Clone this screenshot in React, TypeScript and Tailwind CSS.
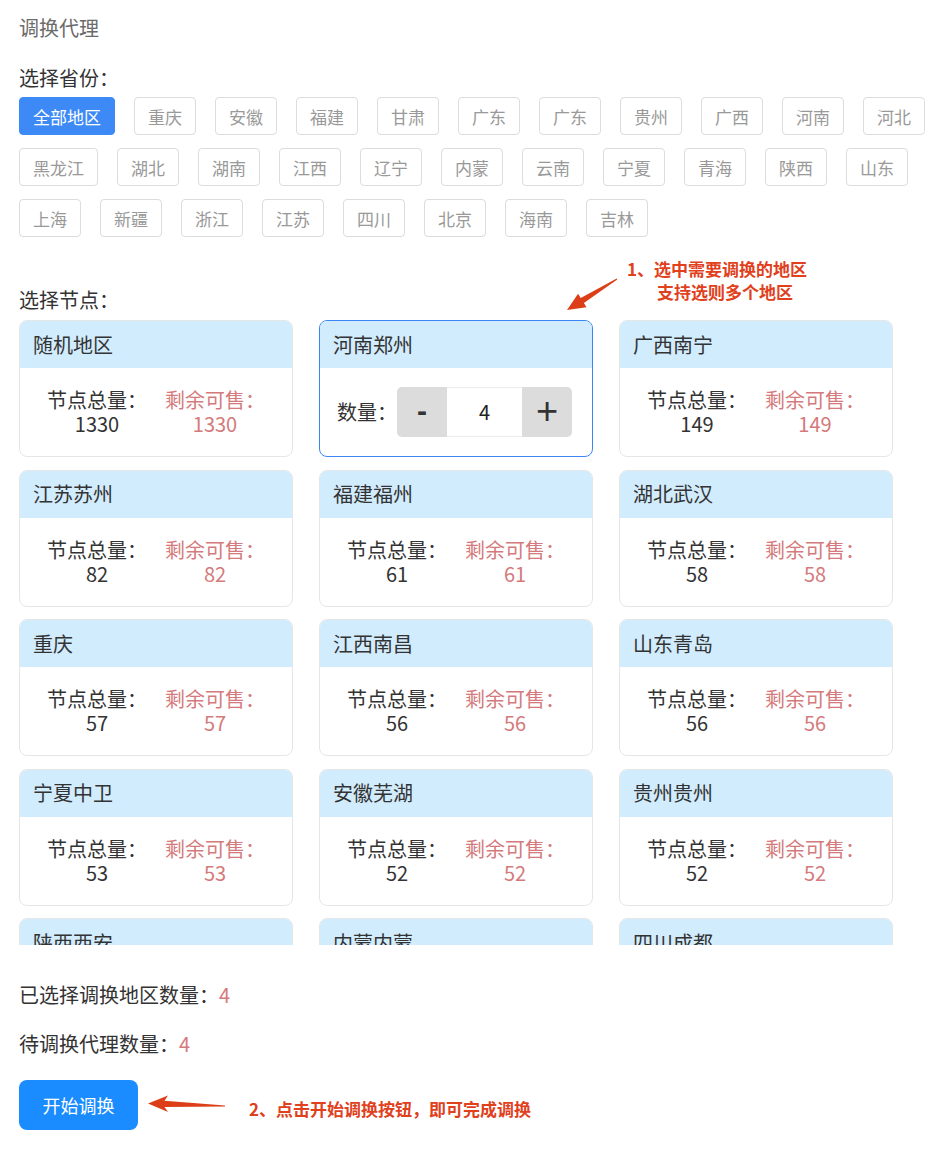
import React, { useState } from "react";

const provinces = [
  "全部地区", "重庆", "安徽", "福建", "甘肃", "广东", "广东", "贵州", "广西", "河南", "河北",
  "黑龙江", "湖北", "湖南", "江西", "辽宁", "内蒙", "云南", "宁夏", "青海", "陕西", "山东",
  "上海", "新疆", "浙江", "江苏", "四川", "北京", "海南", "吉林",
];

type Node = { name: string; total: number; left: number };

const nodes: Node[] = [
  { name: "随机地区", total: 1330, left: 1330 },
  { name: "河南郑州", total: 96, left: 96 },
  { name: "广西南宁", total: 149, left: 149 },
  { name: "江苏苏州", total: 82, left: 82 },
  { name: "福建福州", total: 61, left: 61 },
  { name: "湖北武汉", total: 58, left: 58 },
  { name: "重庆", total: 57, left: 57 },
  { name: "江西南昌", total: 56, left: 56 },
  { name: "山东青岛", total: 56, left: 56 },
  { name: "宁夏中卫", total: 53, left: 53 },
  { name: "安徽芜湖", total: 52, left: 52 },
  { name: "贵州贵州", total: 52, left: 52 },
  { name: "陕西西安", total: 50, left: 50 },
  { name: "内蒙内蒙", total: 48, left: 48 },
  { name: "四川成都", total: 47, left: 47 },
];

function Stepper({ value, onChange }: { value: number; onChange: (v: number) => void }) {
  return (
    <div className="flex h-[50px]">
      <button
        className="w-[50px] h-[50px] bg-[#dcdcdc] rounded-l-[5px] flex items-center justify-center text-[#333] font-['Liberation_Sans',sans-serif] font-bold text-[30px] leading-none pb-[2px]"
        onClick={() => onChange(Math.max(0, value - 1))}
      >
        -
      </button>
      <div className="w-[75px] h-[50px] border-y border-[#ececec] bg-white flex items-center justify-center text-[20px] text-[#222]">
        {value}
      </div>
      <button
        className="w-[50px] h-[50px] bg-[#dcdcdc] rounded-r-[5px] flex items-center justify-center text-[#333] font-['Liberation_Sans',sans-serif] text-[38px] leading-none pb-[3px]"
        onClick={() => onChange(value + 1)}
      >
        +
      </button>
    </div>
  );
}

function NodeCard({
  node,
  selected,
  count,
  onCount,
}: {
  node: Node;
  selected: boolean;
  count: number;
  onCount: (v: number) => void;
}) {
  return (
    <div
      className={
        "h-[137px] rounded-[8px] border overflow-hidden flex flex-col bg-white " +
        (selected ? "border-[#3b86f5]" : "border-[#e6e6e6]")
      }
    >
      <div className="h-[47px] shrink-0 bg-[#d1ecfd] flex items-center pl-[13px] text-[20px] leading-[28px] text-[#333]">
        {node.name}
      </div>
      {selected ? (
        <div className="flex-1 flex items-center pl-[17px]">
          <span className="text-[20px] leading-[28px] text-[#333]">数量：</span>
          <Stepper value={count} onChange={onCount} />
        </div>
      ) : (
        <div className="flex-1 grid grid-cols-2 items-center px-[18px] text-[20px] leading-[24px]">
          <div className="flex flex-col items-center text-[#333]">
            <span>节点总量：</span>
            <span>{node.total}</span>
          </div>
          <div className="flex flex-col items-center text-[#d47a7c]">
            <span>剩余可售：</span>
            <span>{node.left}</span>
          </div>
        </div>
      )}
    </div>
  );
}

export default function App() {
  const [active, setActive] = useState(0);
  const [count, setCount] = useState(4);

  return (
    <div className="relative w-[937px] h-[1161px] bg-white overflow-hidden pl-[19px] font-['Noto_Sans_CJK_SC','Noto_Sans',sans-serif]">
      <div className="mt-[14px] h-[28px] leading-[28px] text-[20px] text-[#6b6b6b]">调换代理</div>

      <div className="mt-[22px] h-[28px] leading-[28px] text-[20px] text-[#333]">选择省份：</div>

      <div className="mt-[5px] flex flex-wrap gap-x-[19px] gap-y-[13px]">
        {provinces.map((p, i) => (
          <button
            key={i}
            onClick={() => setActive(i)}
            className={
              "h-[38px] px-[13px] rounded-[4px] border text-[17px] leading-none flex items-center " +
              (i === active
                ? "bg-[#3d8af7] border-[#3d8af7] text-white"
                : "bg-white border-[#dcdcdc] text-[#999]")
            }
          >
            {p}
          </button>
        ))}
      </div>

      <div className="mt-[49px] h-[28px] leading-[28px] text-[20px] text-[#333]">选择节点：</div>

      <div className="mt-[6px] h-[625px] overflow-hidden">
        <div className="grid grid-cols-[274px_274px_274px] gap-x-[26px] gap-y-[12.5px]">
          {nodes.map((n, i) => (
            <NodeCard key={i} node={n} selected={i === 1} count={count} onCount={setCount} />
          ))}
        </div>
      </div>

      <div className="mt-[36px] h-[28px] leading-[28px] text-[20px] text-[#333]">
        已选择调换地区数量：<span className="text-[#d47a7c]">{count}</span>
      </div>
      <div className="mt-[21px] h-[28px] leading-[28px] text-[20px] text-[#333]">
        待调换代理数量：<span className="text-[#d47a7c]">{count}</span>
      </div>

      <button className="mt-[22px] w-[119px] h-[50px] rounded-[8px] bg-[#1a8cff] text-white text-[18px] flex items-center justify-center">
        开始调换
      </button>

      {/* callout 1: region selection hint */}
      <div className="absolute left-[627px] top-[257px] text-[17px] leading-[23px] font-bold text-[#e0401c] whitespace-nowrap">
        <div>1、选中需要调换的地区</div>
        <div className="ml-[30px]">支持选则多个地区</div>
      </div>
      <svg className="absolute left-[560px] top-[272px]" width="65" height="45" viewBox="0 0 65 45">
        <polygon
          points="7,38 26.5,35.3 23.9,31 57.3,7.4 56.7,6.6 20.7,26 18.1,21.7"
          fill="#dc3f17"
        />
      </svg>

      {/* callout 2: start button hint */}
      <svg className="absolute left-[140px] top-[1090px]" width="90" height="30" viewBox="0 0 90 30">
        <polygon points="8,13.5 28,5.5 24.5,10.8 85,15.4 85,16.6 24.5,17 28,22" fill="#dc3f17" />
      </svg>
      <div className="absolute left-[249px] top-[1097px] text-[17px] leading-[24px] font-bold text-[#e0401c] whitespace-nowrap">
        2、点击开始调换按钮，即可完成调换
      </div>
    </div>
  );
}
